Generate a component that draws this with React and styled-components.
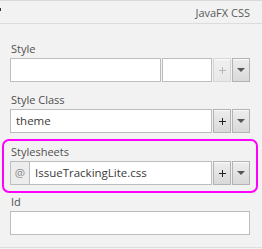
import React from "react";
import styled, { createGlobalStyle } from "styled-components";

const GlobalStyle = createGlobalStyle`
  html, body {
    margin: 0;
    padding: 0;
    background: #f2f2f2;
  }
  body {
    font-family: "Open Sans", "Noto Sans", "DejaVu Sans", sans-serif;
    color: #444;
  }
`;

const Panel = styled.div`
  width: 262px;
  height: 249px;
  background: #f2f2f2;
  box-sizing: border-box;
  overflow: hidden;
`;

const Header = styled.div`
  height: 24px;
  box-sizing: border-box;
  border-top: 1px solid #dadada;
  border-bottom: 1px solid #dcdcdc;
  display: flex;
  align-items: center;
  justify-content: space-between;
  padding: 0 12px 0 0;
  font-size: 11px;
  color: #5a5a5a;
`;

const Tick = styled.span`
  width: 1px;
  height: 3px;
  margin-bottom: 5px;
  background: #334;
`;

const Content = styled.div`
  padding: 17px 12px 0 10px;
  height: 224px;
  box-sizing: border-box;
  border-bottom: 1px solid #dedede;
  display: flex;
  flex-direction: column;
`;

const Field = styled.div`
  display: flex;
  flex-direction: column;
  margin-top: ${(p) => p.$top || 0}px;
`;

const Label = styled.div`
  font-size: 11px;
  line-height: 16px;
  height: 16px;
  margin-bottom: 1px;
  padding-left: 1px;
  color: #505050;
`;

const Row = styled.div`
  display: flex;
  gap: 1px;
  height: 24px;
`;

const Input = styled.div`
  box-sizing: border-box;
  height: 24px;
  background: #fff;
  border: 1px solid #bdbdbd;
  font-size: 11.5px;
  line-height: 22px;
  padding-left: 5px;
  color: #3a3a3a;
  ${(p) => (p.$width ? `width: ${p.$width}px; flex: none;` : "flex: 1;")}
  ${(p) => p.$joined && "border-left: none;"}
`;

const Prefix = styled.div`
  box-sizing: border-box;
  width: 20px;
  height: 24px;
  border: 1px solid #bdbdbd;
  background: #ededed;
  color: #888;
  font-size: 11.5px;
  line-height: 22px;
  text-align: center;
`;

const Joined = styled.div`
  display: flex;
  flex: 1;
`;

const Button = styled.div`
  box-sizing: border-box;
  width: 18px;
  height: 24px;
  flex: none;
  display: flex;
  align-items: center;
  justify-content: center;
  border: 1px solid ${(p) => (p.$disabled ? "#d6d6d6" : "#b3b3b3")};
  background: ${(p) =>
    p.$disabled
      ? "linear-gradient(#f0f0f0, #e8e8e8)"
      : "linear-gradient(#ededed, #d9d9d9)"};
  box-shadow: inset 0 1px 0 rgba(255, 255, 255, 0.7);
`;

const Plus = styled.span`
  position: relative;
  width: 7px;
  height: 7px;
  &::before,
  &::after {
    content: "";
    position: absolute;
    background: ${(p) => (p.$disabled ? "#b8b8b8" : "#222")};
  }
  &::before {
    left: 0;
    top: 3px;
    width: 7px;
    height: 1px;
  }
  &::after {
    left: 3px;
    top: 0;
    width: 1px;
    height: 7px;
  }
`;

const Arrow = styled.span`
  width: 0;
  height: 0;
  border-left: 4px solid transparent;
  border-right: 4px solid transparent;
  border-top: 4px solid #555;
`;

const Highlight = styled.div`
  margin: 6px -8px 0 -8px;
  padding: 3px 6px 6px 6px;
  border: 2px solid #ff00ff;
  border-radius: 7px;
`;

function AddButton({ disabled }) {
  return (
    <Button $disabled={disabled}>
      <Plus $disabled={disabled} />
    </Button>
  );
}

function MenuButton() {
  return (
    <Button>
      <Arrow />
    </Button>
  );
}

export default function App() {
  return (
    <Panel>
      <GlobalStyle />
      <Header>
        <Tick />
        <span>JavaFX CSS</span>
      </Header>
      <Content>
        <Field>
          <Label>Style</Label>
          <Row>
            <Input $width={151} />
            <Input />
            <AddButton disabled />
            <MenuButton />
          </Row>
        </Field>

        <Field $top={10}>
          <Label>Style Class</Label>
          <Row>
            <Input>theme</Input>
            <AddButton />
            <MenuButton />
          </Row>
        </Field>

        <Highlight>
          <Field>
            <Label>Stylesheets</Label>
            <Row>
              <Joined>
                <Prefix>@</Prefix>
                <Input $joined>IssueTrackingLite.css</Input>
              </Joined>
              <AddButton />
              <MenuButton />
            </Row>
          </Field>
        </Highlight>

        <Field $top={1}>
          <Label>Id</Label>
          <Row>
            <Input />
          </Row>
        </Field>
      </Content>
    </Panel>
  );
}
